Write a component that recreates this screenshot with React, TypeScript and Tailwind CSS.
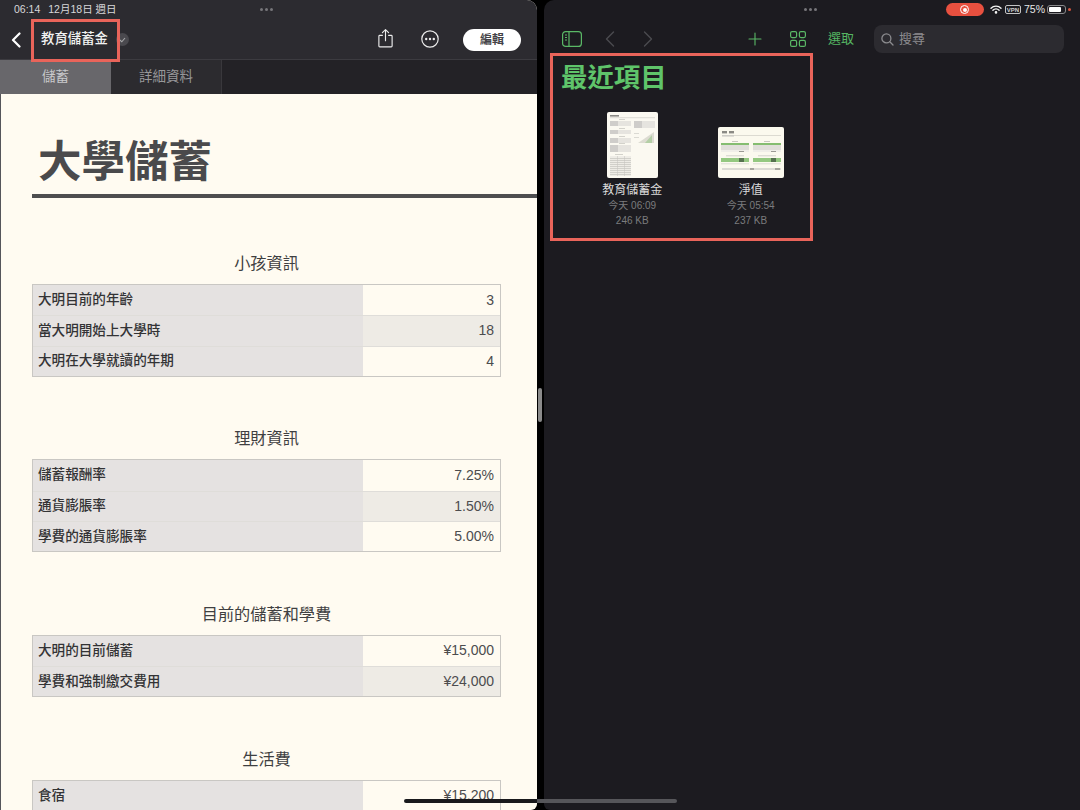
import React from 'react';

const sections = [
  {
    title: '小孩資訊',
    rows: [
      ['大明目前的年齡', '3'],
      ['當大明開始上大學時', '18'],
      ['大明在大學就讀的年期', '4'],
    ],
  },
  {
    title: '理財資訊',
    rows: [
      ['儲蓄報酬率', '7.25%'],
      ['通貨膨脹率', '1.50%'],
      ['學費的通貨膨脹率', '5.00%'],
    ],
  },
  {
    title: '目前的儲蓄和學費',
    rows: [
      ['大明的目前儲蓄', '¥15,000'],
      ['學費和強制繳交費用', '¥24,000'],
    ],
  },
  {
    title: '生活費',
    rows: [['食宿', '¥15,200']],
  },
];

function Dots() {
  return (
    <div className="flex gap-[2px]">
      <span className="h-[3px] w-[3px] rounded-full bg-[#77767a]" />
      <span className="h-[3px] w-[3px] rounded-full bg-[#77767a]" />
      <span className="h-[3px] w-[3px] rounded-full bg-[#77767a]" />
    </div>
  );
}

function Thumb1() {
  return (
    <svg width="51" height="66" viewBox="0 0 51 66" className="rounded-[2px] bg-[#fbf9f1]">
      <rect x="3" y="3" width="9" height="1.6" fill="#8a8985" />
      <rect x="3" y="5.6" width="45" height="0.5" fill="#bdbcb6" />
      {[
        [9, 5],
        [18, 4],
        [26, 5],
        [33, 7],
      ].map(([y, h]) => (
        <g key={y}>
          <rect x="12" y={y - 1.6} width="6" height="0.6" fill="#b9b8b3" />
          <rect x="3" y={y} width="21" height={h} fill="#e6e4df" />
          <rect x="3" y={y} width="8" height={h} fill="#cfcdca" />
        </g>
      ))}
      <rect x="27" y="9" width="21" height="7" fill="#e6e4df" />
      <rect x="27" y="9" width="8" height="7" fill="#cfcdca" />
      <polygon points="31,31 47,31 47,20" fill="#dddcd2" />
      <polygon points="38,31 45,31 45,23" fill="#b4cfa6" />
      <rect x="27" y="21" width="5" height="0.6" fill="#c6c5c0" />
      <rect x="27" y="25" width="5" height="0.6" fill="#c6c5c0" />
      <rect x="8" y="42" width="8" height="0.6" fill="#b9b8b3" />
      <rect x="3" y="44" width="21" height="20" fill="#eeece6" />
      {[46, 48, 50, 52, 54, 56, 58, 60, 62].map((y) => (
        <rect key={y} x="3" y={y} width="21" height="0.5" fill="#b5b4af" />
      ))}
      <rect x="10" y="44" width="0.5" height="20" fill="#c4c3be" />
      <rect x="17" y="44" width="0.5" height="20" fill="#c4c3be" />
    </svg>
  );
}

function Thumb2() {
  return (
    <svg width="66" height="51" viewBox="0 0 66 51" className="rounded-[2px] bg-[#fbf9ee]">
      <rect x="4" y="4" width="5" height="2.4" fill="#8b8a84" />
      <rect x="11" y="4" width="5" height="2.4" fill="#8b8a84" />
      <rect x="4" y="8" width="12" height="1.6" fill="#cfcec8" />
      <rect x="16" y="8.5" width="47" height="0.5" fill="#bcbbb5" />
      {[3, 35].map((x) => (
        <g key={x}>
          <rect x={x + 11} y="14" width="6" height="0.7" fill="#b4b3ad" />
          <rect x={x} y="16" width="28" height="2" fill="#85bd70" />
          <rect x={x} y="18" width="28" height="5" fill="#e0ded9" />
          <rect x={x} y="23" width="28" height="2" fill="#f0eee8" />
          <rect x={x + 18} y="24" width="5" height="1" fill="#9a9993" />
          <rect x={x} y="31" width="28" height="4" fill="#94c880" />
          <rect x={x + 18} y="31" width="5" height="4" fill="#55714e" />
          <rect x={x + 5} y="28.5" width="18" height="0.7" fill="#c2c1bb" />
          <rect x={x} y="36.5" width="28" height="0.7" fill="#d0cfc9" />
        </g>
      ))}
      <rect x="4" y="41" width="59" height="2" fill="#dcdad4" />
      <rect x="32" y="41" width="4" height="2" fill="#a6a49d" />
      <rect x="57" y="41" width="5" height="2" fill="#a6a49d" />
    </svg>
  );
}

function FileItem({ name, date, size, children }: { name: string; date: string; size: string; children: React.ReactNode }) {
  return (
    <div className="flex w-[120px] flex-col items-center">
      <div className="flex h-[66px] items-end">{children}</div>
      <div className="mt-[3px] text-[12px] leading-[18px] text-[#d9d9da]">{name}</div>
      <div className="text-[10px] leading-[14px] text-[#7b7b7e]">{date}</div>
      <div className="text-[10px] leading-[15px] text-[#7b7b7e]">{size}</div>
    </div>
  );
}

export default function App() {
  return (
    <div className="relative flex h-[810px] w-[1080px] overflow-hidden bg-black font-['Liberation_Sans','Noto_Sans_CJK_TC',sans-serif]">
      {/* left: numbers document */}
      <div className="flex h-full w-[537px] flex-col overflow-hidden rounded-tr-[10px] rounded-br-[6px] bg-[#fffbf1]">
        <div className="h-[60px] shrink-0 border-b border-[#3c3b40] bg-[#2c2b30]">
          <div className="relative flex h-[19px] items-center px-[14px] text-[10.5px] text-[#d8d8d9]">
            <span>06:14</span>
            <span className="ml-[8px]">12月18日 週日</span>
            <div className="absolute left-[260px] top-[8px]">
              <Dots />
            </div>
          </div>
          <div className="flex h-[40px] items-center pt-[1px]">
            <svg width="10" height="16" viewBox="0 0 10 16" className="ml-[11px]" fill="none" stroke="#fff" strokeWidth="2.2" strokeLinecap="round" strokeLinejoin="round">
              <path d="M8.5 1.5 2 8l6.5 6.5" />
            </svg>
            <span className="ml-[20px] text-[13.4px] font-medium text-[#f2f2f2]">教育儲蓄金</span>
            <span className="ml-[8px] flex h-[13px] w-[13px] items-center justify-center rounded-full bg-[#4a494e]">
              <svg width="7" height="6" viewBox="0 0 7 6" fill="none" stroke="#a8a8aa" strokeWidth="1.1">
                <path d="M1 3l1.8 1.8L6 1" />
              </svg>
            </span>
            <svg width="15" height="20" viewBox="0 0 17 22" className="ml-[249px] mt-[-4px]" fill="none" stroke="#ececec" strokeWidth="1.3" strokeLinecap="round" strokeLinejoin="round">
              <path d="M5 8H2a1 1 0 0 0-1 1v11a1 1 0 0 0 1 1h13a1 1 0 0 0 1-1V9a1 1 0 0 0-1-1h-3" />
              <path d="M8.5 14V1.5M5 5l3.5-3.5L12 5" />
            </svg>
            <svg width="18" height="18" viewBox="0 0 18 18" className="ml-[28px] mt-[-1px]" fill="none">
              <circle cx="9" cy="9" r="8.2" stroke="#ececec" strokeWidth="1.2" />
              <circle cx="5.2" cy="9" r="1.2" fill="#ececec" />
              <circle cx="9" cy="9" r="1.2" fill="#ececec" />
              <circle cx="12.8" cy="9" r="1.2" fill="#ececec" />
            </svg>
            <div className="ml-[24px] flex h-[22px] w-[58px] items-center justify-center rounded-full bg-white text-[12px] font-bold text-[#444347]">
              編輯
            </div>
          </div>
        </div>
        <div className="flex h-[34px] shrink-0 bg-[#232226] text-[13.5px]">
          <div className="flex w-[111px] items-center justify-center bg-[#68676b] text-[#c9c9cb]">儲蓄</div>
          <div className="flex w-[111px] items-center justify-center border-r border-[#39383c] bg-[#2c2b2f] text-[#98989a]">詳細資料</div>
        </div>

        <div className="flex-1 overflow-hidden border-l border-[#55555a]">
          <h1 className="ml-[37px] mt-[45px] text-[43.5px] font-bold leading-[46px] text-[#4a4a4c]">大學儲蓄</h1>
          <div className="ml-[31px] mt-[9px] h-[4px] bg-[#4e4e4f]" />
          <div className="ml-[31px] mt-[55px] flex w-[469px] flex-col gap-[51.4px]">
            {sections.map((section) => (
              <section key={section.title}>
                <h2 className="h-[20px] text-center text-[16.2px] leading-[20px] text-[#3f3f41]">{section.title}</h2>
                <div className="mt-[11px] border border-[#c9c7c3]">
                  {section.rows.map(([label, value], i) => (
                    <div key={label} className={`flex h-[30.33px] ${i > 0 ? 'border-t border-[#dfddd9]' : ''}`}>
                      <div className="flex w-[330px] items-center bg-[#e5e2e1] pl-[5px] text-[13.6px] font-medium text-[#333335]">{label}</div>
                      <div className={`flex flex-1 items-center justify-end pr-[6px] text-[14px] text-[#4c4c4e] ${i % 2 === 1 ? 'bg-[#eeebe5]' : ''}`}>
                        {value}
                      </div>
                    </div>
                  ))}
                </div>
              </section>
            ))}
          </div>
        </div>
      </div>

      {/* right: document browser */}
      <div className="ml-[7px] flex h-full flex-1 flex-col rounded-tl-[10px] rounded-bl-[6px] bg-[#1c1b20]">
        <div className="relative flex h-[19px] items-center justify-end pr-[9px]">
          <div className="absolute left-[260px] top-[8px]">
            <Dots />
          </div>
          <div className="mr-[6px] flex h-[13px] w-[38px] items-center justify-center rounded-full bg-[#e8503f]">
            <span className="flex h-[9px] w-[9px] items-center justify-center rounded-full border border-white">
              <span className="h-[4px] w-[4px] rounded-full bg-white" />
            </span>
          </div>
          <svg width="12" height="9" viewBox="0 0 12 9" className="mr-[3px]" fill="none" stroke="#f4f4f4" strokeWidth="1.4" strokeLinecap="round">
            <path d="M1 3.2a7 7 0 0 1 10 0M2.9 5.2a4.3 4.3 0 0 1 6.2 0" />
            <circle cx="6" cy="7.4" r="0.6" fill="#f4f4f4" />
          </svg>
          <span className="mr-[3px] flex h-[9px] w-[16px] items-center justify-center rounded-[2px] border border-[#c4c4c4] text-[6px] font-bold leading-none text-[#d0d0d0]">VPN</span>
          <span className="mr-[2px] text-[10.5px] text-[#e6e6e6]">75%</span>
          <div className="flex h-[9px] w-[19px] items-center rounded-[3px] border border-[#8a8a8c] p-[1px]">
            <div className="h-full w-[12px] rounded-[1px] bg-white" />
          </div>
          <span className="ml-[2px] h-[3px] w-[3px] rounded-full bg-[#d9563f]" />
        </div>

        <div className="flex h-[40px] items-center text-[#5cb85f]">
          <svg width="20" height="16" viewBox="0 0 20 16" className="ml-[18px]" fill="none" stroke="#5ab866" strokeWidth="1.2">
            <rect x="0.6" y="0.6" width="18.8" height="14.8" rx="3" />
            <path d="M7 1v14M3 4h2M3 6.5h2M3 9h2" />
          </svg>
          <svg width="10" height="16" viewBox="0 0 10 16" className="ml-[23px]" fill="none" stroke="#4b4b4f" strokeWidth="1.4" strokeLinecap="round" strokeLinejoin="round">
            <path d="M8.5 1 1.5 8l7 7" />
          </svg>
          <svg width="10" height="16" viewBox="0 0 10 16" className="ml-[28px]" fill="none" stroke="#4b4b4f" strokeWidth="1.4" strokeLinecap="round" strokeLinejoin="round">
            <path d="M1.5 1l7 7-7 7" />
          </svg>
          <svg width="14" height="14" viewBox="0 0 14 14" className="ml-[95px]" fill="none" stroke="#5ab866" strokeWidth="1.1" strokeLinecap="round">
            <path d="M7 1v12M1 7h12" />
          </svg>
          <svg width="16" height="16" viewBox="0 0 16 16" className="ml-[28px]" fill="none" stroke="#5ab866" strokeWidth="1.2">
            <rect x="0.6" y="0.6" width="6" height="6" rx="1.5" />
            <rect x="9.4" y="0.6" width="6" height="6" rx="1.5" />
            <rect x="0.6" y="9.4" width="6" height="6" rx="1.5" />
            <rect x="9.4" y="9.4" width="6" height="6" rx="1.5" />
          </svg>
          <span className="ml-[22px] text-[13px] text-[#55b562]">選取</span>
          <div className="ml-[20px] flex h-[28px] w-[190px] items-center rounded-[8px] bg-[#2c2b30] pl-[7px] text-[13px] text-[#8c8c8f]">
            <svg width="13" height="13" viewBox="0 0 13 13" fill="none" stroke="#8c8c8f" strokeWidth="1.3" strokeLinecap="round">
              <circle cx="5.4" cy="5.4" r="4.5" />
              <path d="M8.8 8.8 12 12" />
            </svg>
            <span className="ml-[5px]">搜尋</span>
          </div>
        </div>

        <div className="ml-[6px] mt-[-6px] h-[188px] w-[263px] border-[3px] border-[#e9645a] pl-[8px]">
          <h1 className="mt-[7px] text-[26.4px] font-bold leading-[30px] text-[#5fc46a]">最近項目</h1>
          <div className="ml-[12px] mt-[19px] flex">
            <FileItem name="教育儲蓄金" date="今天 06:09" size="246 KB">
              <Thumb1 />
            </FileItem>
            <FileItem name="淨值" date="今天 05:54" size="237 KB">
              <Thumb2 />
            </FileItem>
          </div>
        </div>
      </div>

      {/* title highlight, drag handle and home bar sit over the panels */}
      <div className="absolute left-[31px] top-[19px] h-[43px] w-[89px] border-[3px] border-[#e9645a]" />
      <div className="absolute left-[538px] top-[388px] h-[34px] w-[4px] rounded-full bg-[#8b8b8b]" />
      <div className="absolute left-[404px] top-[799px] flex h-[4px] w-[273px] overflow-hidden rounded-full">
        <div className="w-[133px] bg-[#19191c]" />
        <div className="flex-1 bg-[#56565a]" />
      </div>
    </div>
  );
}
